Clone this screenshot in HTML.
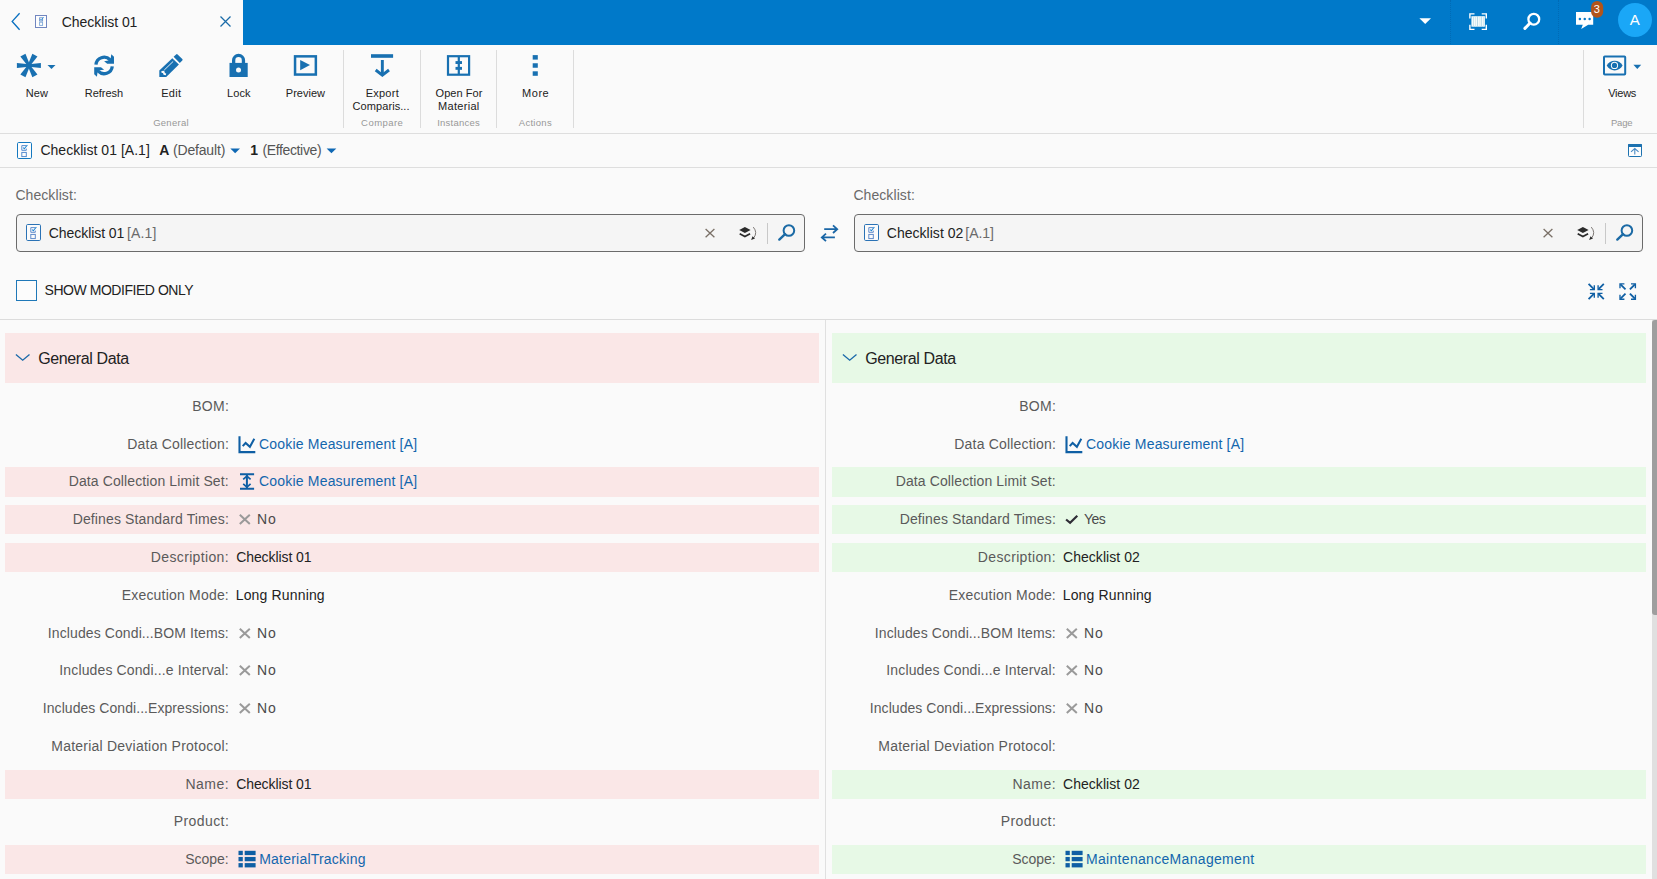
<!DOCTYPE html>
<html lang="en"><head><meta charset="utf-8"><title>Checklist 01</title>
<style>
html,body{margin:0;padding:0;}
body{width:1657px;height:879px;overflow:hidden;background:#fafafa;position:relative;font-family:"Liberation Sans", sans-serif;}
.b{position:absolute;box-sizing:content-box;}
.t{position:absolute;white-space:pre;line-height:20px;}
.ov{position:absolute;left:0;top:0;}
</style></head><body>
<div class="b" style="left:0;top:0;width:1657px;height:45px;background:#0079c9"></div>
<div class="b" style="left:0;top:0;width:243px;height:45px;background:#fafafa"></div>
<div class="b" style="left:1450px;top:0;width:0;height:44px;border-left:1px dotted rgba(0,40,90,.16)"></div>
<div class="b" style="left:1558px;top:0;width:0;height:44px;border-left:1px dotted rgba(0,40,90,.16)"></div>
<div class="b" style="left:343px;top:50px;width:1px;height:78px;background:#dcdcdc"></div>
<div class="b" style="left:420px;top:50px;width:1px;height:78px;background:#dcdcdc"></div>
<div class="b" style="left:496px;top:50px;width:1px;height:78px;background:#dcdcdc"></div>
<div class="b" style="left:573px;top:50px;width:1px;height:78px;background:#dcdcdc"></div>
<div class="b" style="left:1583px;top:50px;width:1px;height:78px;background:#dcdcdc"></div>
<div class="b" style="left:0;top:133px;width:1657px;height:1px;background:#dedede"></div>
<div class="b" style="left:0;top:167px;width:1657px;height:1px;background:#dedede"></div>
<div class="b" style="left:0;top:319px;width:1657px;height:1px;background:#dcdcdc"></div>
<div class="b" style="left:825px;top:320px;width:1px;height:559px;background:#e0e0e0"></div>
<div class="b" style="left:16px;top:214px;width:787px;height:36px;border:1px solid #6b6b6b;border-radius:4px;background:#f5f5f5"></div>
<div class="b" style="left:767px;top:223px;width:1px;height:21px;background:#c8c8c8"></div>
<div class="b" style="left:854px;top:214px;width:787px;height:36px;border:1px solid #6b6b6b;border-radius:4px;background:#f5f5f5"></div>
<div class="b" style="left:1605px;top:223px;width:1px;height:21px;background:#c8c8c8"></div>
<div class="b" style="left:16px;top:280px;width:19px;height:19px;border:1px solid #1f78b8;background:#fcfcfc"></div>
<div class="b" style="left:5px;top:333px;width:814px;height:49.7px;background:#fae7e7"></div>
<div class="b" style="left:5px;top:467px;width:814px;height:30px;background:#fae7e7"></div>
<div class="b" style="left:5px;top:505px;width:814px;height:29px;background:#fae7e7"></div>
<div class="b" style="left:5px;top:543px;width:814px;height:29px;background:#fae7e7"></div>
<div class="b" style="left:5px;top:770px;width:814px;height:29px;background:#fae7e7"></div>
<div class="b" style="left:5px;top:845px;width:814px;height:29px;background:#fae7e7"></div>
<div class="b" style="left:832px;top:333px;width:814px;height:49.7px;background:#e7f9e6"></div>
<div class="b" style="left:832px;top:467px;width:814px;height:30px;background:#e7f9e6"></div>
<div class="b" style="left:832px;top:505px;width:814px;height:29px;background:#e7f9e6"></div>
<div class="b" style="left:832px;top:543px;width:814px;height:29px;background:#e7f9e6"></div>
<div class="b" style="left:832px;top:770px;width:814px;height:29px;background:#e7f9e6"></div>
<div class="b" style="left:832px;top:845px;width:814px;height:29px;background:#e7f9e6"></div>
<div class="b" style="left:1652px;top:320px;width:5px;height:559px;background:#e0e0e0"></div>
<div class="b" style="left:1652px;top:320px;width:9px;height:295px;background:#9e9e9e;border-radius:3px"></div>
<div class="b" style="left:1617.8px;top:2.7px;width:34.4px;height:34.4px;border-radius:50%;background:#1aa7f7"></div>
<svg class="ov" width="1657" height="879" viewBox="0 0 1657 879"><polyline points="19.6,13.3 12.2,21.4 19.6,29.7" fill="none" stroke="#0a70c0" stroke-width="1.35"/><rect x="35.5" y="15.5" width="11" height="12" fill="#fff" fill-opacity=".6" stroke="#7186c0" stroke-width="1"/><rect x="39.6" y="17.8" width="3" height="3.2" fill="none" stroke="#6d93c9" stroke-width=".9"/><rect x="39.6" y="22.2" width="3" height="3.2" fill="none" stroke="#7fa8d8" stroke-width=".9"/><path d="M40.3 19.2L41.2 20.2L43.6 17.2" fill="none" stroke="#2f8fd8" stroke-width=".9"/><path d="M220.5 16.5L230.5 26.5M230.5 16.5L220.5 26.5" stroke="#1a6ba8" stroke-width="1.25" fill="none"/><polygon points="28.90,66.75 40.90,68.10 40.90,62.90 28.90,64.25" fill="#1870b1"/><polygon points="27.82,66.12 32.35,77.37 37.45,74.42 29.98,64.88" fill="#1870b1"/><polygon points="27.82,64.88 20.35,74.42 25.45,77.37 29.98,66.12" fill="#1870b1"/><polygon points="28.90,64.25 16.90,62.90 16.90,68.10 28.90,66.75" fill="#1870b1"/><polygon points="29.98,64.88 25.45,53.63 20.35,56.58 27.82,66.12" fill="#1870b1"/><polygon points="29.98,66.12 37.45,56.58 32.35,53.63 27.82,64.88" fill="#1870b1"/><circle cx="28.9" cy="65.5" r="2.2" fill="#1870b1"/><polygon points="47.5,65 55.5,65 51.5,69.1" fill="#1870b1"/><path d="M95.94 64.59 A8.2 8.2 0 0 1 110.00 59.75" fill="none" stroke="#1870b1" stroke-width="3.3"/><polygon points="111.27,54.19 113.98,56.70 113.98,63.67 107.20,63.67 104.10,61.15 108.76,60.57 110.70,58.45" fill="#1870b1"/><path d="M112.26 66.31 A8.2 8.2 0 0 1 98.20 71.15" fill="none" stroke="#1870b1" stroke-width="3.3"/><polygon points="96.93,76.71 94.22,74.20 94.22,67.23 101.00,67.23 104.10,69.75 99.44,70.33 97.50,72.45" fill="#1870b1"/><polygon points="172.30,58.30 178.90,64.50 166.20,77.00 159.30,77.00 159.30,70.50" fill="#1870b1"/><path d="M173.6 56.8 L176.1 54.4 Q176.85 53.7 177.6 54.4 L182.3 59.05 Q183.05 59.8 182.3 60.5 L179.8 62.9 Z" fill="#1870b1"/><line x1="173.2" y1="61.4" x2="164.2" y2="70.1" stroke="#e4eef6" stroke-width="1"/><path d="M161.5 72.0 L163.5 71.7 L164.3 74.0 L166.0 74.4" fill="none" stroke="#fafafa" stroke-width="1.9"/><rect x="229.5" y="62.9" width="18.2" height="14.1" fill="#1870b1"/><path d="M233.65 63.2V60.35A4.9 4.9 0 0 1 243.45 60.35V63.2" fill="none" stroke="#1870b1" stroke-width="3.3"/><circle cx="238.5" cy="69.9" r="2.5" fill="#fafafa"/><rect x="295.05" y="56.35" width="20.8" height="18.2" fill="none" stroke="#1870b1" stroke-width="2.5"/><polygon points="300.2,60 310,65.1 300.2,70.2" fill="#1870b1"/><rect x="371" y="54.2" width="22.1" height="3.6" fill="#1870b1"/><rect x="380.9" y="60" width="2.9" height="14.5" fill="#1870b1"/><polyline points="375.7,70.0 382.35,75.2 389.0,70.0" fill="none" stroke="#1870b1" stroke-width="2.9"/><rect x="448" y="56.2" width="21.1" height="18.5" fill="none" stroke="#1870b1" stroke-width="2.2"/><rect x="457.7" y="56" width="2.2" height="19" fill="#1870b1"/><rect x="455.5" y="61.1" width="6.5" height="2.9" fill="#1870b1"/><rect x="455.5" y="66.9" width="6.5" height="2.9" fill="#1870b1"/><rect x="532.7" y="55.1" width="5.1" height="4.5" fill="#1870b1"/><rect x="532.7" y="63.25" width="5.1" height="4.5" fill="#1870b1"/><rect x="532.7" y="71.3" width="5.1" height="4.5" fill="#1870b1"/><rect x="1604" y="56.5" width="21.2" height="18.1" rx="0.8" fill="none" stroke="#1870b1" stroke-width="2"/><path d="M1606.7 65.6 C1609.6 59.2 1619.7 59.2 1622.6 65.6 C1619.7 72 1609.6 72 1606.7 65.6Z" fill="#1870b1"/><circle cx="1614.5" cy="65.4" r="3.6" fill="#fafafa"/><circle cx="1614.5" cy="65.4" r="2.6" fill="#1870b1"/><polygon points="1633.4,64.8 1641.2,64.8 1637.3,69.1" fill="#1870b1"/><polygon points="1419.4,18.3 1431,18.3 1425.2,24.1" fill="#fff"/><path d="M1474.5 13.9H1469.9V18.5M1481.7 13.9H1486.3V18.5M1474.5 29.4H1469.9V24.799999999999997M1481.7 29.4H1486.3V24.799999999999997" fill="none" stroke="#fff" stroke-width="1.4"/><rect x="1471.4" y="16.2" width="13.5" height="10.5" fill="#f3fbfb"/><rect x="1473.2" y="16.2" width=".7" height="10.5" fill="#b9d9e6"/><rect x="1475.1" y="16.2" width=".7" height="10.5" fill="#cfe3ea"/><rect x="1477.3" y="16.2" width=".7" height="10.5" fill="#9fc9dd"/><rect x="1479.6" y="16.2" width=".7" height="10.5" fill="#cfe3ea"/><rect x="1481.3" y="16.2" width=".7" height="10.5" fill="#a9d3e3"/><rect x="1483.2" y="16.2" width=".7" height="10.5" fill="#cfe3ea"/><circle cx="1533.8" cy="19.2" r="5.4" fill="none" stroke="#fff" stroke-width="2.3"/><line x1="1530.05" y1="23.08" x2="1524.9" y2="28.4" stroke="#fff" stroke-width="3.0" stroke-linecap="round"/><path d="M1576 12.1H1593.2V24.7H1588.2L1581.2 29.1L1582.8 24.7H1576Z" fill="#fff"/><circle cx="1579.9" cy="19" r="1.25" fill="#0a79c7"/><circle cx="1584.75" cy="19" r="1.25" fill="#0a79c7"/><circle cx="1589.6" cy="19" r="1.25" fill="#0a79c7"/><rect x="1591.1" y="0.9" width="12.1" height="16.9" rx="6" fill="#b2541a"/><rect x="17.5" y="142.5" width="14" height="16" rx="1.2" fill="#fff" fill-opacity=".55" stroke="#1479c0" stroke-width="1"/><path d="M26.3 145.6H21.8V150.3H26.3V148.6" fill="none" stroke="#4f86cc" stroke-width=".95"/><path d="M23.1 147.5L24.3 148.8L27.4 145.0" fill="none" stroke="#1d84d2" stroke-width="1.05"/><rect x="21.8" y="152.4" width="4.5" height="4.2" fill="none" stroke="#4f86cc" stroke-width=".95"/><rect x="1628.5" y="144.5" width="13" height="12" rx=".8" fill="#fdfdfd" stroke="#1d72b0" stroke-width="1"/><rect x="1628" y="144" width="14" height="3" rx=".6" fill="#1d72b0"/><path d="M1634.8 154.6V149M1631 151.9L1634.8 148.6L1638.6 151.9" fill="none" stroke="#4a8bc4" stroke-width="1.1"/><polygon points="230.3,148.6 240.0,148.6 235.15,153.2" fill="#0f68b4"/><polygon points="326.6,148.6 336.3,148.6 331.45000000000005,153.2" fill="#0f68b4"/><rect x="26.5" y="224.5" width="14" height="16" rx="1.2" fill="#fff" fill-opacity=".55" stroke="#2a72b5" stroke-width="1"/><path d="M35.3 227.6H30.8V232.3H35.3V230.6" fill="none" stroke="#5a86c8" stroke-width=".95"/><path d="M32.1 229.5L33.3 230.8L36.4 227.0" fill="none" stroke="#1d84d2" stroke-width="1.05"/><rect x="30.8" y="234.4" width="4.5" height="4.2" fill="none" stroke="#5a86c8" stroke-width=".95"/><path d="M705.6 229L714.4 237.2M714.4 229L705.6 237.2" stroke="#7a7067" stroke-width="1.3" fill="none"/><polygon points="744.90,227.00 750.60,230.00 744.90,233.00 739.20,230.00" fill="#2b2b2b"/><polyline points="739.70,233.80 744.90,236.60 750.10,233.80" fill="none" stroke="#2b2b2b" stroke-width="1.7"/><path d="M753.30 227.10 Q757.80 232.50 753.80 237.80" fill="none" stroke="#6f6a66" stroke-width=".9"/><polygon points="752.50,236.20 751.10,239.90 755.00,238.50" fill="#2b2b2b"/><circle cx="788.9" cy="230.5" r="5.3" fill="none" stroke="#1b6aa5" stroke-width="2.0"/><line x1="785.05" y1="234.15" x2="779.3" y2="239.6" stroke="#1b6aa5" stroke-width="2.4" stroke-linecap="round"/><rect x="864.5" y="224.5" width="14" height="16" rx="1.2" fill="#fff" fill-opacity=".55" stroke="#2a72b5" stroke-width="1"/><path d="M873.3 227.6H868.8V232.3H873.3V230.6" fill="none" stroke="#5a86c8" stroke-width=".95"/><path d="M870.1 229.5L871.3 230.8L874.4 227.0" fill="none" stroke="#1d84d2" stroke-width="1.05"/><rect x="868.8" y="234.4" width="4.5" height="4.2" fill="none" stroke="#5a86c8" stroke-width=".95"/><path d="M1543.6 229L1552.4 237.2M1552.4 229L1543.6 237.2" stroke="#7a7067" stroke-width="1.3" fill="none"/><polygon points="1582.90,227.00 1588.60,230.00 1582.90,233.00 1577.20,230.00" fill="#2b2b2b"/><polyline points="1577.70,233.80 1582.90,236.60 1588.10,233.80" fill="none" stroke="#2b2b2b" stroke-width="1.7"/><path d="M1591.30 227.10 Q1595.80 232.50 1591.80 237.80" fill="none" stroke="#6f6a66" stroke-width=".9"/><polygon points="1590.50,236.20 1589.10,239.90 1593.00,238.50" fill="#2b2b2b"/><circle cx="1626.9" cy="230.5" r="5.3" fill="none" stroke="#1b6aa5" stroke-width="2.0"/><line x1="1623.05" y1="234.15" x2="1617.3" y2="239.6" stroke="#1b6aa5" stroke-width="2.4" stroke-linecap="round"/><path d="M824.2 229.2H837M833 225.4L837.2 229.2L833 233M834.9 237.4H822.1M826 233.6L821.8 237.4L826 241.2" fill="none" stroke="#1a66a6" stroke-width="1.8"/><path d="M1588.60 283.90L1593.80 289.10" fill="none" stroke="#0f5fa4" stroke-width="1.8"/><path d="M1589.90 289.60L1594.30 289.60L1594.30 285.20" fill="none" stroke="#0f5fa4" stroke-width="1.35" stroke-linejoin="miter"/><path d="M1603.80 283.90L1598.60 289.10" fill="none" stroke="#0f5fa4" stroke-width="1.8"/><path d="M1602.50 289.60L1598.10 289.60L1598.10 285.20" fill="none" stroke="#0f5fa4" stroke-width="1.35" stroke-linejoin="miter"/><path d="M1588.60 299.10L1593.80 293.90" fill="none" stroke="#0f5fa4" stroke-width="1.8"/><path d="M1589.90 293.40L1594.30 293.40L1594.30 297.80" fill="none" stroke="#0f5fa4" stroke-width="1.35" stroke-linejoin="miter"/><path d="M1603.80 299.10L1598.60 293.90" fill="none" stroke="#0f5fa4" stroke-width="1.8"/><path d="M1602.50 293.40L1598.10 293.40L1598.10 297.80" fill="none" stroke="#0f5fa4" stroke-width="1.35" stroke-linejoin="miter"/><path d="M1625.50 289.30L1620.50 284.30" fill="none" stroke="#0f5fa4" stroke-width="1.8"/><path d="M1624.40 283.80L1620.00 283.80L1620.00 288.20" fill="none" stroke="#0f5fa4" stroke-width="1.35" stroke-linejoin="miter"/><path d="M1629.90 289.30L1634.90 284.30" fill="none" stroke="#0f5fa4" stroke-width="1.8"/><path d="M1631.00 283.80L1635.40 283.80L1635.40 288.20" fill="none" stroke="#0f5fa4" stroke-width="1.35" stroke-linejoin="miter"/><path d="M1625.50 293.70L1620.50 298.70" fill="none" stroke="#0f5fa4" stroke-width="1.8"/><path d="M1624.40 299.20L1620.00 299.20L1620.00 294.80" fill="none" stroke="#0f5fa4" stroke-width="1.35" stroke-linejoin="miter"/><path d="M1629.90 293.70L1634.90 298.70" fill="none" stroke="#0f5fa4" stroke-width="1.8"/><path d="M1631.00 299.20L1635.40 299.20L1635.40 294.80" fill="none" stroke="#0f5fa4" stroke-width="1.35" stroke-linejoin="miter"/><polyline points="15.9,354.6 22.7,360.2 29.5,354.6" fill="none" stroke="#1b6aaa" stroke-width="1.35"/><path d="M239.5 436.20V452.10H255.3" fill="none" stroke="#0f5fa4" stroke-width="2.1"/><polyline points="242.7,446.20 245.6,443.00 249.9,446.80 254.3,438.80" fill="none" stroke="#0f5fa4" stroke-width="2"/><path d="M239.8 628.8L249.8 638.1M249.8 628.8L239.8 638.1" stroke="#9a9a9a" stroke-width="2.0" fill="none"/><path d="M239.8 665.8L249.8 675.1M249.8 665.8L239.8 675.1" stroke="#9a9a9a" stroke-width="2.0" fill="none"/><path d="M239.8 703.8L249.8 713.1M249.8 703.8L239.8 713.1" stroke="#9a9a9a" stroke-width="2.0" fill="none"/><rect x="238.5" y="850.80" width="4.3" height="4.3" fill="#0f5fa4"/><rect x="244.7" y="850.80" width="10.9" height="4.3" fill="#0f5fa4"/><rect x="238.5" y="856.95" width="4.3" height="4.3" fill="#0f5fa4"/><rect x="244.7" y="856.95" width="10.9" height="4.3" fill="#0f5fa4"/><rect x="238.5" y="863.10" width="4.3" height="4.3" fill="#0f5fa4"/><rect x="244.7" y="863.10" width="10.9" height="4.3" fill="#0f5fa4"/><polyline points="842.9,354.6 849.7,360.2 856.5,354.6" fill="none" stroke="#1b6aaa" stroke-width="1.35"/><path d="M1066.5 436.20V452.10H1082.3" fill="none" stroke="#0f5fa4" stroke-width="2.1"/><polyline points="1069.7,446.20 1072.6,443.00 1076.9,446.80 1081.3,438.80" fill="none" stroke="#0f5fa4" stroke-width="2"/><path d="M1066.8 628.8L1076.8 638.1M1076.8 628.8L1066.8 638.1" stroke="#9a9a9a" stroke-width="2.0" fill="none"/><path d="M1066.8 665.8L1076.8 675.1M1076.8 665.8L1066.8 675.1" stroke="#9a9a9a" stroke-width="2.0" fill="none"/><path d="M1066.8 703.8L1076.8 713.1M1076.8 703.8L1066.8 713.1" stroke="#9a9a9a" stroke-width="2.0" fill="none"/><rect x="1065.5" y="850.80" width="4.3" height="4.3" fill="#0f5fa4"/><rect x="1071.7" y="850.80" width="10.9" height="4.3" fill="#0f5fa4"/><rect x="1065.5" y="856.95" width="4.3" height="4.3" fill="#0f5fa4"/><rect x="1071.7" y="856.95" width="10.9" height="4.3" fill="#0f5fa4"/><rect x="1065.5" y="863.10" width="4.3" height="4.3" fill="#0f5fa4"/><rect x="1071.7" y="863.10" width="10.9" height="4.3" fill="#0f5fa4"/><path d="M240 474.2H254.1M240 488.85H254.1M246.9 474.5V488.5" fill="none" stroke="#0f5fa4" stroke-width="2"/><path d="M243.2 479.3L246.9 476.1L250.6 479.3M243.2 483.9L246.9 487.1L250.6 483.9" fill="none" stroke="#0f5fa4" stroke-width="1.7"/><path d="M239.8 514.8L249.8 524.1M249.8 514.8L239.8 524.1" stroke="#9a9a9a" stroke-width="2.0" fill="none"/><polyline points="1066.1,519.50 1070.1,522.80 1077.3,515.80" fill="none" stroke="#2f2d36" stroke-width="2.2"/></svg>
<span class="t" style="left:61.75px;top:12.00px;font-size:14px;color:#222222;letter-spacing:-0.054px;">Checklist 01</span>
<span class="t" style="left:25.65px;top:83.00px;font-size:11px;color:#222222;letter-spacing:0.192px;">New</span>
<span class="t" style="left:84.85px;top:83.00px;font-size:11px;color:#222222;letter-spacing:-0.042px;">Refresh</span>
<span class="t" style="left:161.27px;top:83.00px;font-size:11px;color:#222222;letter-spacing:0.242px;">Edit</span>
<span class="t" style="left:227.03px;top:83.00px;font-size:11px;color:#222222;letter-spacing:0.085px;">Lock</span>
<span class="t" style="left:285.85px;top:83.00px;font-size:11px;color:#222222;letter-spacing:0.006px;">Preview</span>
<span class="t" style="left:365.65px;top:83.00px;font-size:11px;color:#222222;letter-spacing:0.253px;">Export</span>
<span class="t" style="left:435.61px;top:83.00px;font-size:11px;color:#222222;letter-spacing:0.034px;">Open For</span>
<span class="t" style="left:522.04px;top:83.00px;font-size:11px;color:#222222;letter-spacing:0.546px;">More</span>
<span class="t" style="left:1608.24px;top:83.00px;font-size:11px;color:#222222;letter-spacing:-0.254px;">Views</span>
<span class="t" style="left:352.55px;top:96.00px;font-size:11px;color:#222222;letter-spacing:0.076px;">Comparis...</span>
<span class="t" style="left:438.04px;top:96.00px;font-size:11px;color:#222222;letter-spacing:0.302px;">Material</span>
<span class="t" style="left:153.16px;top:113.00px;font-size:9.5px;color:#989898;letter-spacing:0.265px;">General</span>
<span class="t" style="left:361.10px;top:113.00px;font-size:9.5px;color:#989898;letter-spacing:0.446px;">Compare</span>
<span class="t" style="left:437.25px;top:113.00px;font-size:9.5px;color:#989898;letter-spacing:0.218px;">Instances</span>
<span class="t" style="left:518.75px;top:113.00px;font-size:9.5px;color:#989898;letter-spacing:0.295px;">Actions</span>
<span class="t" style="left:1610.96px;top:113.00px;font-size:9.5px;color:#989898;letter-spacing:-0.169px;">Page</span>
<span class="t" style="left:40.39px;top:140.00px;font-size:14px;color:#222222;letter-spacing:0.030px;">Checklist 01 [A.1]</span>
<span class="t" style="left:159.18px;top:140.00px;font-size:14px;color:#222222;font-weight:700;">A</span>
<span class="t" style="left:172.96px;top:140.00px;font-size:14px;color:#555;letter-spacing:-0.163px;">(Default)</span>
<span class="t" style="left:250.28px;top:140.00px;font-size:14px;color:#222222;font-weight:700;">1</span>
<span class="t" style="left:262.39px;top:140.00px;font-size:14px;color:#555;letter-spacing:-0.351px;">(Effective)</span>
<span class="t" style="left:15.39px;top:185.00px;font-size:14px;color:#6a6a6a;letter-spacing:0.079px;">Checklist:</span>
<span class="t" style="left:48.75px;top:223.00px;font-size:14px;color:#222222;letter-spacing:-0.058px;">Checklist 01</span>
<span class="t" style="left:127.02px;top:223.00px;font-size:14px;color:#6a6a6a;letter-spacing:0.160px;">[A.1]</span>
<span class="t" style="left:853.39px;top:185.00px;font-size:14px;color:#6a6a6a;letter-spacing:0.079px;">Checklist:</span>
<span class="t" style="left:886.75px;top:223.00px;font-size:14px;color:#222222;letter-spacing:0.030px;">Checklist 02</span>
<span class="t" style="left:965.31px;top:223.00px;font-size:14px;color:#6a6a6a;letter-spacing:-0.026px;">[A.1]</span>
<span class="t" style="left:44.60px;top:280.00px;font-size:14px;color:#222222;letter-spacing:-0.462px;">SHOW MODIFIED ONLY</span>
<span class="t" style="left:38.31px;top:349.00px;font-size:16px;color:#222222;letter-spacing:-0.391px;">General Data</span>
<span class="t" style="left:192.24px;top:396.00px;font-size:14px;color:#5a5a5a;letter-spacing:0.270px;">BOM:</span>
<span class="t" style="left:127.33px;top:434.00px;font-size:14px;color:#5a5a5a;letter-spacing:0.178px;">Data Collection:</span>
<span class="t" style="left:68.70px;top:471.00px;font-size:14px;color:#5a5a5a;letter-spacing:0.111px;">Data Collection Limit Set:</span>
<span class="t" style="left:72.70px;top:509.00px;font-size:14px;color:#5a5a5a;letter-spacing:0.127px;">Defines Standard Times:</span>
<span class="t" style="left:150.85px;top:547.00px;font-size:14px;color:#5a5a5a;letter-spacing:0.352px;">Description:</span>
<span class="t" style="left:121.70px;top:585.00px;font-size:14px;color:#5a5a5a;letter-spacing:0.199px;">Execution Mode:</span>
<span class="t" style="left:47.84px;top:623.00px;font-size:14px;color:#5a5a5a;letter-spacing:0.101px;">Includes Condi...BOM Items:</span>
<span class="t" style="left:59.33px;top:660.00px;font-size:14px;color:#5a5a5a;letter-spacing:0.131px;">Includes Condi...e Interval:</span>
<span class="t" style="left:42.82px;top:698.00px;font-size:14px;color:#5a5a5a;letter-spacing:0.055px;">Includes Condi...Expressions:</span>
<span class="t" style="left:51.24px;top:736.00px;font-size:14px;color:#5a5a5a;letter-spacing:0.231px;">Material Deviation Protocol:</span>
<span class="t" style="left:185.43px;top:774.00px;font-size:14px;color:#5a5a5a;letter-spacing:0.503px;">Name:</span>
<span class="t" style="left:173.70px;top:811.00px;font-size:14px;color:#5a5a5a;letter-spacing:0.427px;">Product:</span>
<span class="t" style="left:185.22px;top:849.00px;font-size:14px;color:#5a5a5a;letter-spacing:-0.010px;">Scope:</span>
<span class="t" style="left:258.98px;top:434.00px;font-size:14px;color:#1366ad;letter-spacing:0.195px;">Cookie Measurement [A]</span>
<span class="t" style="left:235.73px;top:585.00px;font-size:14px;color:#222222;letter-spacing:0.159px;">Long Running</span>
<span class="t" style="left:257.02px;top:623.00px;font-size:14px;color:#4a4a4a;letter-spacing:0.800px;">No</span>
<span class="t" style="left:257.02px;top:660.00px;font-size:14px;color:#4a4a4a;letter-spacing:0.800px;">No</span>
<span class="t" style="left:257.02px;top:698.00px;font-size:14px;color:#4a4a4a;letter-spacing:0.800px;">No</span>
<span class="t" style="left:865.31px;top:349.00px;font-size:16px;color:#222222;letter-spacing:-0.391px;">General Data</span>
<span class="t" style="left:1019.24px;top:396.00px;font-size:14px;color:#5a5a5a;letter-spacing:0.270px;">BOM:</span>
<span class="t" style="left:954.33px;top:434.00px;font-size:14px;color:#5a5a5a;letter-spacing:0.178px;">Data Collection:</span>
<span class="t" style="left:895.70px;top:471.00px;font-size:14px;color:#5a5a5a;letter-spacing:0.111px;">Data Collection Limit Set:</span>
<span class="t" style="left:899.70px;top:509.00px;font-size:14px;color:#5a5a5a;letter-spacing:0.127px;">Defines Standard Times:</span>
<span class="t" style="left:977.85px;top:547.00px;font-size:14px;color:#5a5a5a;letter-spacing:0.352px;">Description:</span>
<span class="t" style="left:948.70px;top:585.00px;font-size:14px;color:#5a5a5a;letter-spacing:0.199px;">Execution Mode:</span>
<span class="t" style="left:874.84px;top:623.00px;font-size:14px;color:#5a5a5a;letter-spacing:0.101px;">Includes Condi...BOM Items:</span>
<span class="t" style="left:886.33px;top:660.00px;font-size:14px;color:#5a5a5a;letter-spacing:0.131px;">Includes Condi...e Interval:</span>
<span class="t" style="left:869.82px;top:698.00px;font-size:14px;color:#5a5a5a;letter-spacing:0.055px;">Includes Condi...Expressions:</span>
<span class="t" style="left:878.24px;top:736.00px;font-size:14px;color:#5a5a5a;letter-spacing:0.231px;">Material Deviation Protocol:</span>
<span class="t" style="left:1012.43px;top:774.00px;font-size:14px;color:#5a5a5a;letter-spacing:0.503px;">Name:</span>
<span class="t" style="left:1000.70px;top:811.00px;font-size:14px;color:#5a5a5a;letter-spacing:0.427px;">Product:</span>
<span class="t" style="left:1012.22px;top:849.00px;font-size:14px;color:#5a5a5a;letter-spacing:-0.010px;">Scope:</span>
<span class="t" style="left:1085.98px;top:434.00px;font-size:14px;color:#1366ad;letter-spacing:0.195px;">Cookie Measurement [A]</span>
<span class="t" style="left:1062.73px;top:585.00px;font-size:14px;color:#222222;letter-spacing:0.159px;">Long Running</span>
<span class="t" style="left:1084.02px;top:623.00px;font-size:14px;color:#4a4a4a;letter-spacing:0.800px;">No</span>
<span class="t" style="left:1084.02px;top:660.00px;font-size:14px;color:#4a4a4a;letter-spacing:0.800px;">No</span>
<span class="t" style="left:1084.02px;top:698.00px;font-size:14px;color:#4a4a4a;letter-spacing:0.800px;">No</span>
<span class="t" style="left:258.98px;top:471.00px;font-size:14px;color:#1366ad;letter-spacing:0.195px;">Cookie Measurement [A]</span>
<span class="t" style="left:257.02px;top:509.00px;font-size:14px;color:#4a4a4a;letter-spacing:0.800px;">No</span>
<span class="t" style="left:1084.06px;top:509.00px;font-size:14px;color:#4a4a4a;letter-spacing:-0.567px;">Yes</span>
<span class="t" style="left:236.14px;top:547.00px;font-size:14px;color:#222222;letter-spacing:-0.072px;">Checklist 01</span>
<span class="t" style="left:1062.98px;top:547.00px;font-size:14px;color:#222222;letter-spacing:0.052px;">Checklist 02</span>
<span class="t" style="left:236.14px;top:774.00px;font-size:14px;color:#222222;letter-spacing:-0.072px;">Checklist 01</span>
<span class="t" style="left:1062.98px;top:774.00px;font-size:14px;color:#222222;letter-spacing:0.052px;">Checklist 02</span>
<span class="t" style="left:259.24px;top:849.00px;font-size:14px;color:#1366ad;letter-spacing:0.215px;">MaterialTracking</span>
<span class="t" style="left:1085.99px;top:849.00px;font-size:14px;color:#1366ad;letter-spacing:0.314px;">MaintenanceManagement</span>
<span class="t" style="left:1593.63px;top:-1.00px;font-size:11px;color:#fff;">3</span>
<span class="t" style="left:1629.86px;top:10.00px;font-size:15px;color:#fff;">A</span>
</body></html>
